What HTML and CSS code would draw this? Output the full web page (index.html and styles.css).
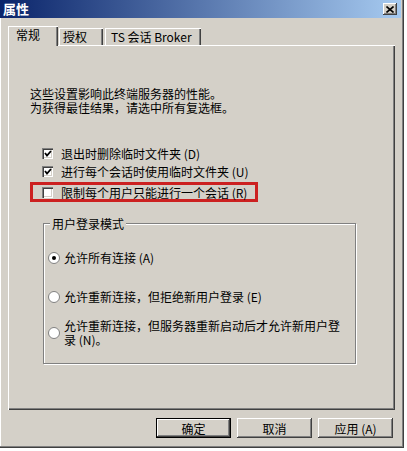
FILE: index.html
```html
<!DOCTYPE html>
<html lang="zh-CN">
<head>
<meta charset="UTF-8">
<title>属性</title>
<link rel="stylesheet" href="styles.css">
</head>
<body>
<div class="window">
    <div class="titlebar">
        <span class="title">属性</span>
        <span class="close"><svg width="8" height="7" viewBox="0 0 8 7"><path d="M0.5 0.5 L7.5 6.5 M7.5 0.5 L0.5 6.5" stroke="#000" stroke-width="1.6"/></svg></span>
    </div>
    <div class="content">
        <div class="tabs">
            <div class="tab tab-active">常规</div>
            <div class="tab tab-license">授权</div>
            <div class="tab tab-broker">TS 会话 Broker</div>
        </div>
        <div class="panel">
            <p class="intro">这些设置影响此终端服务器的性能。<br>为获得最佳结果，请选中所有复选框。</p>
            <div class="checks">
                <label class="check"><span class="box"><svg width="8" height="7" viewBox="0 0 8 7"><polyline points="1,3 3,5.5 7,1" fill="none" stroke="#000" stroke-width="1.8"/></svg></span>退出时删除临时文件夹 (D)</label>
                <label class="check"><span class="box"><svg width="8" height="7" viewBox="0 0 8 7"><polyline points="1,3 3,5.5 7,1" fill="none" stroke="#000" stroke-width="1.8"/></svg></span>进行每个会话时使用临时文件夹 (U)</label>
                <div class="highlight">
                    <label class="check"><span class="box"></span>限制每个用户只能进行一个会话 (R)</label>
                </div>
            </div>
            <fieldset class="group">
                <legend>用户登录模式</legend>
                <label class="radio radio-first"><svg width="12" height="12" viewBox="0 0 12 12"><circle cx="6" cy="6" r="5.5" fill="#fff" stroke="#808080"/><circle cx="6" cy="6" r="2" fill="#000"/></svg><span>允许所有连接 (A)</span></label>
                <label class="radio radio-second"><svg width="12" height="12" viewBox="0 0 12 12"><circle cx="6" cy="6" r="5.5" fill="#fff" stroke="#808080"/></svg><span>允许重新连接，但拒绝新用户登录 (E)</span></label>
                <label class="radio radio-third"><svg width="12" height="12" viewBox="0 0 12 12"><circle cx="6" cy="6" r="5.5" fill="#fff" stroke="#808080"/></svg><span class="wrap">允许重新连接，但服务器重新启动后才允许新用户登<br>录 (N)。</span></label>
            </fieldset>
        </div>
        <div class="buttons">
            <button class="btn btn-default">确定</button>
            <button class="btn">取消</button>
            <button class="btn">应用 (A)</button>
        </div>
    </div>
</div>
</body>
</html>
```

FILE: styles.css
```css
* { box-sizing: border-box; }
body { margin: 0; background: #fff; font: 12px "Noto Sans CJK SC", sans-serif; color: #000; }

.window { width: 404px; height: 448px; background: #d4d0c8; padding-right: 3px; box-shadow: inset -1px -1px #404040, inset -2px -2px #808080, inset 1px 0 #fff; }
.titlebar { height: 18px; display: flex; align-items: center; justify-content: space-between; padding: 0 4px 0 3px; background: linear-gradient(to right, #0a246a, #a6caf0); }
.title { color: #fff; font-weight: bold; font-size: 13px; line-height: 18px; }
.close { width: 14px; height: 12px; display: flex; align-items: center; justify-content: center; background: #d4d0c8; box-shadow: inset -1px -1px #404040, inset 1px 1px #fff, inset -2px -2px #808080; }

.content { padding: 8px 0 0 8px; }
.tabs { display: flex; align-items: flex-end; height: 19px; position: relative; z-index: 1; }
.tab { height: 17px; line-height: 17px; padding-left: 5px; background: #d4d0c8; white-space: nowrap; box-shadow: inset 1px 1px #fff, inset -1px 0 #404040, inset -2px 0 #808080; }
.tab-active { width: 50px; height: 20px; line-height: 18px; margin-bottom: -1px; padding-left: 8px; }
.tab-license { width: 44px; margin-left: 1px; padding-left: 4px; }
.tab-broker { width: 96px; margin-left: 2px; padding-left: 6px; }

.panel { width: 387px; height: 365px; padding: 42px 0 0 22px; box-shadow: inset 1px 1px #fff, inset -1px -1px #404040, inset -2px -2px #808080; }
.intro { margin: 0; line-height: 14px; }

.checks { margin-top: 29px; }
.check { display: flex; align-items: center; gap: 8px; height: 18px; padding-left: 12px; white-space: nowrap; }
.box { width: 11px; height: 11px; flex: none; display: flex; align-items: center; justify-content: center; background: #fff; box-shadow: inset 1px 1px #808080, inset 2px 2px #404040, inset -1px -1px #fff, inset -2px -2px #d4d0c8; }
.highlight { width: 228px; height: 20px; margin-top: 2px; border: 3px solid #cc2020; }
.highlight .check { height: 14px; padding-left: 9px; }

.group { width: 313px; height: 147px; margin: 15px 0 0 13px; padding: 0 0 0 4px; border: 1px solid #808080; box-shadow: 1px 1px #fff, inset 1px 1px #fff; }
.group legend { margin-left: 2px; padding: 0 2px; line-height: 13px; background: #d4d0c8; }
.radio { display: flex; align-items: center; gap: 4px; }
.radio svg { flex: none; }
.radio span { line-height: 14px; white-space: nowrap; }
.radio-first { margin-top: 21px; }
.radio-second { margin-top: 25px; }
.radio-third { margin-top: 15px; }

.buttons { display: flex; justify-content: flex-end; gap: 6px; width: 387px; padding-right: 2px; margin-top: 8px; }
.btn { width: 75px; height: 20px; padding: 0; border: 0; font: inherit; color: #000; background: #d4d0c8; box-shadow: inset -1px -1px #404040, inset 1px 1px #fff, inset -2px -2px #808080; }
.btn-default { box-shadow: inset 0 0 0 1px #000, inset -2px -2px #404040, inset 2px 2px #fff, inset -3px -3px #808080; }
```
